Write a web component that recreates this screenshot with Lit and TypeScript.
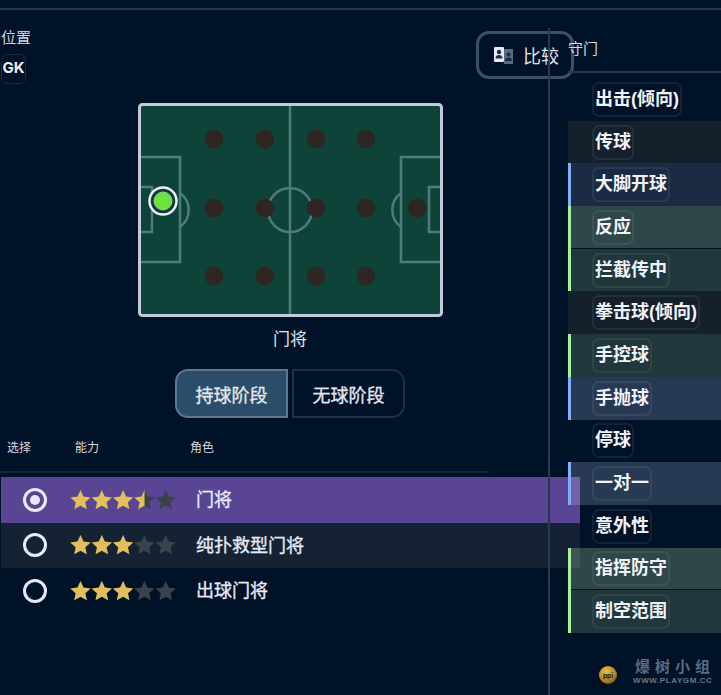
import { LitElement, html, css, svg } from "lit";
import { customElement } from "lit/decorators.js";

type Attr = { name: string; kind: string };
const ATTRS: Attr[] = [
  { name: "出击(倾向)", kind: "none" },
  { name: "传球", kind: "plain" },
  { name: "大脚开球", kind: "blue" },
  { name: "反应", kind: "green-hi" },
  { name: "拦截传中", kind: "green" },
  { name: "拳击球(倾向)", kind: "plain" },
  { name: "手控球", kind: "green" },
  { name: "手抛球", kind: "blue-hi" },
  { name: "停球", kind: "none" },
  { name: "一对一", kind: "blue-hi" },
  { name: "意外性", kind: "none" },
  { name: "指挥防守", kind: "green-hi" },
  { name: "制空范围", kind: "green" },
];

const ROLES = [
  { name: "门将", stars: 3.5, sel: true, cls: "sel" },
  { name: "纯扑救型门将", stars: 3, sel: false, cls: "alt" },
  { name: "出球门将", stars: 3, sel: false, cls: "" },
];

const DOTS: [number, number][] = [
  [214, 139], [265, 139], [316, 139], [366, 139],
  [214, 208], [265, 208], [316, 208], [366, 208], [417, 208],
  [214, 276], [265, 276], [316, 276], [366, 276],
];

const STAR = "M10.5 0l3 6.6 7.2.8-5.4 4.8 1.5 7.1-6.3-3.6-6.3 3.6 1.5-7.1L.3 7.4l7.2-.8z";

function stars(value: number, id: string) {
  const pct = (value / 5) * 106.5;
  return html`<svg class="stars" width="107" height="20" viewBox="0 0 107 20">
    <defs>
      <clipPath id=${id}><rect x="0" y="0" width=${pct} height="20"></rect></clipPath>
    </defs>
    ${[0, 1, 2, 3, 4].map(
      (i) => svg`<path transform="translate(${i * 21.3},0)" d=${STAR} fill="#3a424c"></path>`
    )}
    <g clip-path=${`url(#${id})`}>
      ${[0, 1, 2, 3, 4].map(
        (i) => svg`<path transform="translate(${i * 21.3},0)" d=${STAR} fill="#e2bf5c"></path>`
      )}
    </g>
  </svg>`;
}

@customElement("app-root")
export class AppRoot extends LitElement {
  static styles = css`
    :host {
      display: block;
      width: 721px;
      height: 695px;
      overflow: hidden;
      background: #001228;
      color: #e6e8f4;
      font-family: "Inter", "Noto Sans CJK SC", sans-serif;
      position: relative;
    }
    .topline {
      height: 2px;
      margin-top: 8px;
      background: #24364a;
    }
    .main {
      position: relative;
      height: 685px;
    }
    .vline {
      position: absolute;
      left: 548px;
      top: 18px;
      bottom: 0;
      width: 2px;
      background: #263a50;
      z-index: 3;
    }
    .left {
      position: absolute;
      left: 0;
      top: 0;
      width: 580px;
      z-index: 2;
    }
    .pos-label {
      font-size: 15px;
      line-height: 20px;
      margin: 18px 0 0 1px;
      color: #d5d9e6;
    }
    .gk {
      box-sizing: border-box;
      width: 25px;
      height: 30px;
      margin: 6px 0 0 1px;
      border: 1.5px solid #1a2a40;
      border-radius: 6px;
      font-size: 15px;
      font-weight: 700;
      line-height: 26px;
      text-align: center;
      color: #eceef8;
    }
    .compare {
      position: absolute;
      left: 476px;
      top: 21px;
      box-sizing: border-box;
      width: 98px;
      height: 48px;
      border: 3px solid #3d5068;
      border-radius: 13px;
      display: flex;
      align-items: center;
      gap: 9px;
      padding-left: 15px;
      font-size: 18px;
      color: #dfe3ee;
      background: #001228;
    }
    .pitch-wrap {
      display: flex;
      flex-direction: column;
      align-items: center;
      width: 580px;
    }
    .pitch {
      display: block;
      margin-top: 19px;
      margin-left: 1px;
    }
    .pos-name {
      margin: 11px 0 0 0;
      font-size: 17px;
      line-height: 22px;
      color: #dfe3ee;
    }
    .phase {
      display: flex;
      gap: 4px;
      margin-top: 19px;
    }
    .phase div {
      box-sizing: border-box;
      height: 49px;
      width: 113px;
      display: flex;
      align-items: center;
      justify-content: center;
      font-size: 18px;
      -webkit-text-stroke: 0.3px currentColor;
      color: #e3e6f1;
    }
    .phase .on {
      background: #2c4d69;
      border: 2px solid #5e7890;
      border-radius: 13px 0 0 13px;
    }
    .phase .off {
      border: 2px solid #1e3148;
      border-radius: 0 13px 13px 0;
    }
    .thead {
      display: flex;
      height: 33px;
      margin-top: 20px;
      width: 489px;
      border-bottom: 2px solid #14263a;
      font-size: 12px;
      color: #d5d9e6;
    }
    .thead span {
      line-height: 20px;
    }
    .th1 { width: 75px; padding-left: 7px; box-sizing: border-box; }
    .th2 { width: 115px; }
    .roles { margin-top: 4px; }
    .role {
      display: flex;
      align-items: center;
      height: 45.5px;
      margin-left: 1px;
      font-size: 18px;
      -webkit-text-stroke: 0.3px currentColor;
    }
    .role.sel { background: #5a4594; }
    .role.alt { background: rgba(255, 235, 190, 0.08); }
    .radio {
      box-sizing: border-box;
      width: 24px;
      height: 24px;
      border: 3px solid #e8e9f8;
      border-radius: 50%;
      margin-left: 22px;
      display: flex;
      align-items: center;
      justify-content: center;
      flex: none;
    }
    .radio i {
      width: 10px;
      height: 10px;
      border-radius: 50%;
      background: #e8e9f8;
    }
    .stars {
      margin-left: 23px;
      flex: none;
      display: block;
    }
    .role .name {
      margin-left: 19px;
      margin-top: -3px;
      color: #e8eaf6;
    }
    .right {
      position: absolute;
      left: 568px;
      top: 0;
      width: 153px;
      z-index: 3;
    }
    .right-head {
      height: 61px;
      border-bottom: 2px solid #24364a;
      font-size: 15px;
      line-height: 20px;
      color: #d5d9e6;
    }
    .right-head span { display: block; padding-top: 29px; }
    .rows { margin-top: 5px; }
    .row {
      box-sizing: border-box;
      height: 42.7px;
      padding-left: 21px;
      display: flex;
      align-items: center;
      border-left: 3px solid transparent;
    }
    .row.plain { background: rgba(255, 220, 120, 0.08); }
    .row.blue { background: rgba(200, 220, 255, 0.13); border-left-color: #84aef8; }
    .row.blue-hi { background: rgba(200, 220, 255, 0.2); border-left-color: #84aef8; }
    .row.green { background: rgba(200, 255, 170, 0.16); border-left-color: #a8f09c; }
    .row.green-hi {
      background: rgba(200, 255, 190, 0.23);
      border-left-color: #a8f09c;
      box-shadow: inset 0 -1px 0 #001228;
    }
    .chip {
      box-sizing: border-box;
      height: 35px;
      padding: 0 1px;
      border: 2px solid rgba(255, 255, 255, 0.07);
      border-radius: 7px;
      font-family: "Liberation Sans", "Noto Sans CJK SC", sans-serif;
      font-size: 18px;
      font-weight: 700;
      line-height: 30px;
      color: #f2f3fa;
      white-space: nowrap;
    }
    .mark {
      position: absolute;
      left: 593px;
      top: 645px;
      width: 128px;
      height: 40px;
      z-index: 4;
    }
    .mark .cn {
      position: absolute;
      left: 42px;
      top: 0;
      font-size: 15px;
      font-weight: 700;
      letter-spacing: 5px;
      line-height: 24px;
      white-space: nowrap;
      color: #5b6b84;
    }
    .mark .en {
      position: absolute;
      left: 40px;
      top: 20px;
      font-family: "Liberation Sans", sans-serif;
      font-size: 8px;
      font-weight: 700;
      letter-spacing: 0.6px;
      line-height: 12px;
      white-space: nowrap;
      color: #66768e;
    }
    .mark svg { position: absolute; left: 0; top: 0; }
  `;

  private pitch() {
    const line = "#4f7c78";
    return html`<svg class="pitch" width="305" height="214" viewBox="138 103 305 214">
      <rect x="139.5" y="104.5" width="302" height="211" rx="3" fill="#0e4339" stroke="#c3cbd8" stroke-width="3"></rect>
      <g fill="none" stroke=${line} stroke-width="2.5">
        <line x1="290" y1="106" x2="290" y2="314"></line>
        <circle cx="290" cy="210" r="22"></circle>
        <path d="M141 157h39v105h-39"></path>
        <path d="M141 187h11v45h-11"></path>
        <path d="M180 193a21 21 0 0 1 0 34"></path>
        <path d="M440 157h-39v105h39"></path>
        <path d="M440 187h-11v45h11"></path>
        <path d="M401 193a21 21 0 0 0 0 34"></path>
      </g>
      ${DOTS.map(([x, y]) => svg`<circle cx=${x} cy=${y} r="9.2" fill="#2f2523"></circle>`)}
      <circle cx="163" cy="201" r="13.5" fill="#0e3a3a" stroke="#eceef8" stroke-width="2.5"></circle>
      <circle cx="163" cy="201" r="9" fill="#6ee23c" stroke="#8fd27a" stroke-width="1"></circle>
    </svg>`;
  }

  render() {
    return html`
      <div class="topline"></div>
      <div class="main">
        <div class="vline"></div>
        <div class="left">
          <div class="pos-label">位置</div>
          <div class="gk">GK</div>
          <div class="compare">
            <svg width="20" height="18" viewBox="0 0 20 18">
              <rect x="10" y="3" width="9" height="15" fill="#5a6a7e"></rect>
              <circle cx="14.5" cy="8.5" r="2" fill="#1d2a3c"></circle>
              <path d="M11 15c0-2.5 1.5-3.5 3.5-3.5s3.5 1 3.5 3.5z" fill="#1d2a3c"></path>
              <rect x="0" y="1" width="10" height="15" rx="1" fill="#e8e9f6"></rect>
              <circle cx="5" cy="6" r="2.2" fill="#1d2a3c"></circle>
              <path d="M1.5 12.5c0-2.5 1.5-3.5 3.5-3.5s3.5 1 3.5 3.5z" fill="#1d2a3c"></path>
            </svg>
            <span>比较</span>
          </div>
          <div class="pitch-wrap">
            ${this.pitch()}
            <div class="pos-name">门将</div>
            <div class="phase">
              <div class="on">持球阶段</div>
              <div class="off">无球阶段</div>
            </div>
          </div>
          <div class="thead">
            <span class="th1">选择</span><span class="th2">能力</span><span>角色</span>
          </div>
          <div class="roles">
            ${ROLES.map(
              (r, i) => html`<div class="role ${r.cls}">
                <div class="radio">${r.sel ? html`<i></i>` : ""}</div>
                ${stars(r.stars, `clip${i}`)}
                <div class="name">${r.name}</div>
              </div>`
            )}
          </div>
        </div>
        <div class="right">
          <div class="right-head"><span>守门</span></div>
          <div class="rows">
            ${ATTRS.map(
              (a) => html`<div class="row ${a.kind}"><div class="chip">${a.name}</div></div>`
            )}
          </div>
        </div>
        <div class="mark">
          <svg width="36" height="36" viewBox="0 0 36 36">
            <defs>
              <radialGradient id="ball" cx="0.4" cy="0.3" r="0.8">
                <stop offset="0" stop-color="#f2b94a"></stop>
                <stop offset="0.6" stop-color="#b9862a"></stop>
                <stop offset="1" stop-color="#6e4c14"></stop>
              </radialGradient>
            </defs>
            <g stroke="#0a0a0a" stroke-width="1" fill="none">
              <path d="M5 12l5 4M14 5l1 6M24 4l-2 7M28 14l-4 3M2 24c2 6 7 8 10 7"></path>
            </g>
            <circle cx="15" cy="20" r="9" fill="url(#ball)"></circle>
            <text x="15" y="23" font-size="6.5" font-weight="700" text-anchor="middle" fill="#17120a">ppi</text>
          </svg>
          <div class="cn">爆树小组</div>
          <div class="en">WWW.PLAYGM.CC</div>
        </div>
      </div>
    `;
  }
}
